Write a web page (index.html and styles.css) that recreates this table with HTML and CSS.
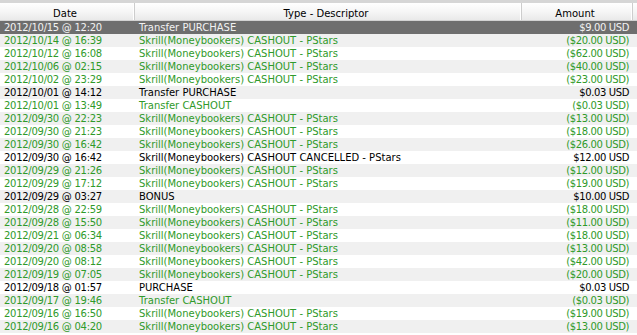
FILE: index.html
```html
<!DOCTYPE html>
<html>
<head>
<meta charset="utf-8">
<link rel="stylesheet" href="styles.css">
</head>
<body>
<div class="list">
  <div class="head">
    <div class="hc">Date</div>
    <div class="hc">Type - Descriptor</div>
    <div class="hc">Amount</div>
    <div class="hc hc-fill"></div>
  </div>
  <div class="row sel"><span class="d">2012/10/15 @ 12:20</span><span class="t">Transfer PURCHASE</span><span class="a">$9.00 USD</span></div>
  <div class="row g"><span class="d">2012/10/14 @ 16:39</span><span class="t">Skrill(Moneybookers) CASHOUT - PStars</span><span class="a">($20.00 USD)</span></div>
  <div class="row g"><span class="d">2012/10/12 @ 16:08</span><span class="t">Skrill(Moneybookers) CASHOUT - PStars</span><span class="a">($62.00 USD)</span></div>
  <div class="row g"><span class="d">2012/10/06 @ 02:15</span><span class="t">Skrill(Moneybookers) CASHOUT - PStars</span><span class="a">($40.00 USD)</span></div>
  <div class="row g"><span class="d">2012/10/02 @ 23:29</span><span class="t">Skrill(Moneybookers) CASHOUT - PStars</span><span class="a">($23.00 USD)</span></div>
  <div class="row"><span class="d">2012/10/01 @ 14:12</span><span class="t">Transfer PURCHASE</span><span class="a">$0.03 USD</span></div>
  <div class="row g"><span class="d">2012/10/01 @ 13:49</span><span class="t">Transfer CASHOUT</span><span class="a">($0.03 USD)</span></div>
  <div class="row g"><span class="d">2012/09/30 @ 22:23</span><span class="t">Skrill(Moneybookers) CASHOUT - PStars</span><span class="a">($13.00 USD)</span></div>
  <div class="row g"><span class="d">2012/09/30 @ 21:23</span><span class="t">Skrill(Moneybookers) CASHOUT - PStars</span><span class="a">($18.00 USD)</span></div>
  <div class="row g"><span class="d">2012/09/30 @ 16:42</span><span class="t">Skrill(Moneybookers) CASHOUT - PStars</span><span class="a">($26.00 USD)</span></div>
  <div class="row"><span class="d">2012/09/30 @ 16:42</span><span class="t">Skrill(Moneybookers) CASHOUT CANCELLED - PStars</span><span class="a">$12.00 USD</span></div>
  <div class="row g"><span class="d">2012/09/29 @ 21:26</span><span class="t">Skrill(Moneybookers) CASHOUT - PStars</span><span class="a">($12.00 USD)</span></div>
  <div class="row g"><span class="d">2012/09/29 @ 17:12</span><span class="t">Skrill(Moneybookers) CASHOUT - PStars</span><span class="a">($19.00 USD)</span></div>
  <div class="row"><span class="d">2012/09/29 @ 03:27</span><span class="t">BONUS</span><span class="a">$10.00 USD</span></div>
  <div class="row g"><span class="d">2012/09/28 @ 22:59</span><span class="t">Skrill(Moneybookers) CASHOUT - PStars</span><span class="a">($18.00 USD)</span></div>
  <div class="row g"><span class="d">2012/09/28 @ 15:50</span><span class="t">Skrill(Moneybookers) CASHOUT - PStars</span><span class="a">($11.00 USD)</span></div>
  <div class="row g"><span class="d">2012/09/21 @ 06:34</span><span class="t">Skrill(Moneybookers) CASHOUT - PStars</span><span class="a">($18.00 USD)</span></div>
  <div class="row g"><span class="d">2012/09/20 @ 08:58</span><span class="t">Skrill(Moneybookers) CASHOUT - PStars</span><span class="a">($13.00 USD)</span></div>
  <div class="row g"><span class="d">2012/09/20 @ 08:12</span><span class="t">Skrill(Moneybookers) CASHOUT - PStars</span><span class="a">($42.00 USD)</span></div>
  <div class="row g"><span class="d">2012/09/19 @ 07:05</span><span class="t">Skrill(Moneybookers) CASHOUT - PStars</span><span class="a">($20.00 USD)</span></div>
  <div class="row"><span class="d">2012/09/18 @ 01:57</span><span class="t">PURCHASE</span><span class="a">$0.03 USD</span></div>
  <div class="row g"><span class="d">2012/09/17 @ 19:46</span><span class="t">Transfer CASHOUT</span><span class="a">($0.03 USD)</span></div>
  <div class="row g"><span class="d">2012/09/16 @ 16:50</span><span class="t">Skrill(Moneybookers) CASHOUT - PStars</span><span class="a">($19.00 USD)</span></div>
  <div class="row g"><span class="d">2012/09/16 @ 04:20</span><span class="t">Skrill(Moneybookers) CASHOUT - PStars</span><span class="a">($13.00 USD)</span></div>
</div>
</body>
</html>
```
FILE: styles.css
```css
html, body {
  margin: 0;
  padding: 0;
  background: #ffffff;
}
.list {
  width: 637px;
  height: 335px;
  overflow: hidden;
  font-family: "DejaVu Sans", Verdana, sans-serif;
  font-size: 10px;
  color: #000;
}
.head {
  display: grid;
  grid-template-columns: 135px 387px 111px 1fr;
  height: 21px;
  box-sizing: border-box;
  border-top: 3px solid #d6d6d6;
  border-bottom: 1px solid #d2d2d2;
  background: linear-gradient(#ffffff, #f6f6f6 50%, #e9e9e9);
}
.hc {
  border-right: 1px solid #cdcdcd;
  box-shadow: inset -1px 0 0 #ffffff;
  text-align: center;
  padding-top: 4px;
  line-height: 13px;
  padding-right: 4px;
  color: #000;
}
.hc-fill {
  border-right: none;
  box-shadow: none;
}
.row {
  display: grid;
  grid-template-columns: 135px 387px 111px 1fr;
  height: 13px;
  line-height: 13px;
  white-space: nowrap;
}
.row:nth-of-type(odd) {
  background: #f0f0f0;
}
.row.sel {
  background: #6e6e6e;
  color: #f2f2f2;
}
.row.g {
  color: #2f9a2a;
}
.d {
  padding-left: 4px;
  letter-spacing: -0.27px;
}
.t {
  padding-left: 4px;
}
.a {
  text-align: right;
  padding-right: 4px;
  letter-spacing: -0.38px;
}
```
